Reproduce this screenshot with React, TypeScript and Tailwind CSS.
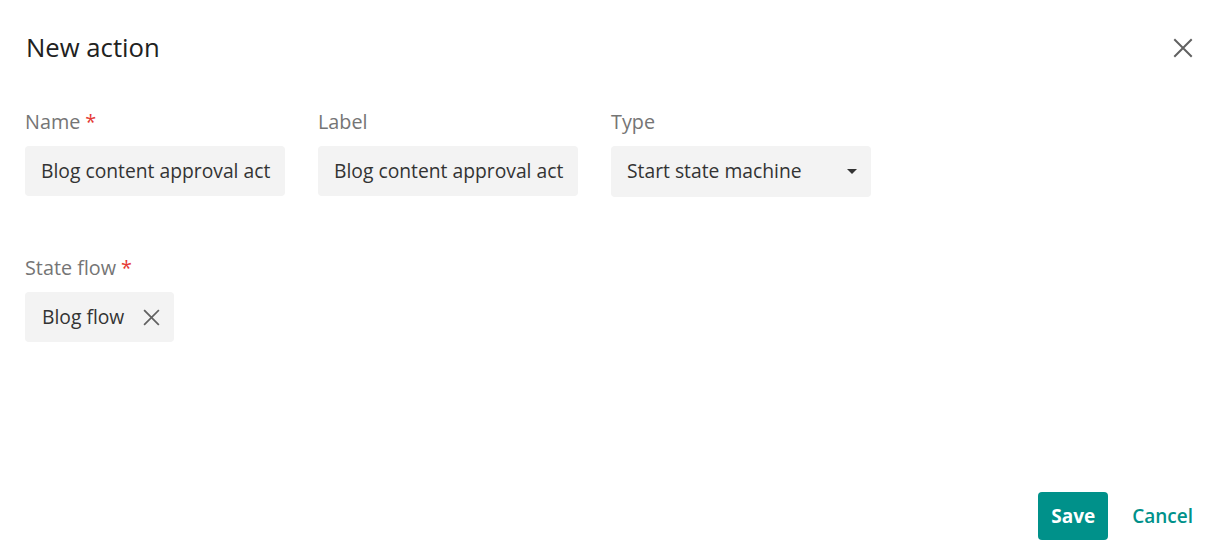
import React from "react";

function CloseIcon({ size, className }: { size: number; className?: string }) {
  return (
    <svg width={size} height={size} viewBox="0 0 20 20" className={className} fill="none">
      <path d="M2 2L18 18M18 2L2 18" stroke="currentColor" strokeWidth="2" strokeLinecap="square" />
    </svg>
  );
}

function Field({ label, required, children }: { label: string; required?: boolean; children: React.ReactNode }) {
  return (
    <div className="flex flex-col">
      <div className="h-[24px] leading-[24px] text-[19.8px] text-[#757575] mb-[12px] whitespace-nowrap">
        {label}
        {required && <span className="text-[#e53935] ml-[5px]">*</span>}
      </div>
      {children}
    </div>
  );
}

export default function App() {
  return (
    <div
      className="w-[1227px] h-[559px] bg-white flex flex-col px-[25px] pb-[19px] overflow-hidden"
      style={{ fontFamily: '"Open Sans", "Noto Sans", sans-serif' }}
    >
      <div className="flex items-center justify-between pt-[30px] pr-[9px]">
        <h1 className="text-[25.7px] leading-[36px] text-[#212121] ml-[1px]">New action</h1>
        <button className="text-[#616161]">
          <CloseIcon size={20} />
        </button>
      </div>

      <div className="flex gap-[33px] mt-[44px]">
        <Field label="Name" required>
          <div className="w-[260px] h-[50px] rounded-[4px] bg-[#f3f3f3] flex items-center pl-[16px] text-[19.3px] text-[#333] overflow-hidden whitespace-nowrap">
            Blog content approval act
          </div>
        </Field>
        <Field label="Label">
          <div className="w-[260px] h-[50px] rounded-[4px] bg-[#f3f3f3] flex items-center pl-[16px] text-[19.3px] text-[#333] overflow-hidden whitespace-nowrap">
            Blog content approval act
          </div>
        </Field>
        <Field label="Type">
          <div className="w-[260px] h-[51px] rounded-[4px] bg-[#f3f3f3] flex items-center justify-between pl-[16px] pr-[14px] text-[19.3px] text-[#333]">
            <span>Start state machine</span>
            <svg width="10" height="5" viewBox="0 0 10 5">
              <path d="M0 0H10L5 5Z" fill="#333" />
            </svg>
          </div>
        </Field>
      </div>

      <div className="mt-[59px]">
        <Field label="State flow" required>
          <div className="self-start flex items-center h-[50px] rounded-[4px] bg-[#f3f3f3] pl-[17px] pr-[14px] text-[19.3px] text-[#333]">
            <span>Blog flow</span>
            <span className="ml-[19px] text-[#616161] flex">
              <CloseIcon size={17} />
            </span>
          </div>
        </Field>
      </div>

      <div className="mt-auto flex items-center justify-end gap-[24px] pr-[9px]">
        <button className="h-[48px] px-[13px] rounded-[4px] bg-[#00918a] text-white font-bold text-[19px]">Save</button>
        <button className="text-[#00918a] font-semibold text-[19px]">Cancel</button>
      </div>
    </div>
  );
}
